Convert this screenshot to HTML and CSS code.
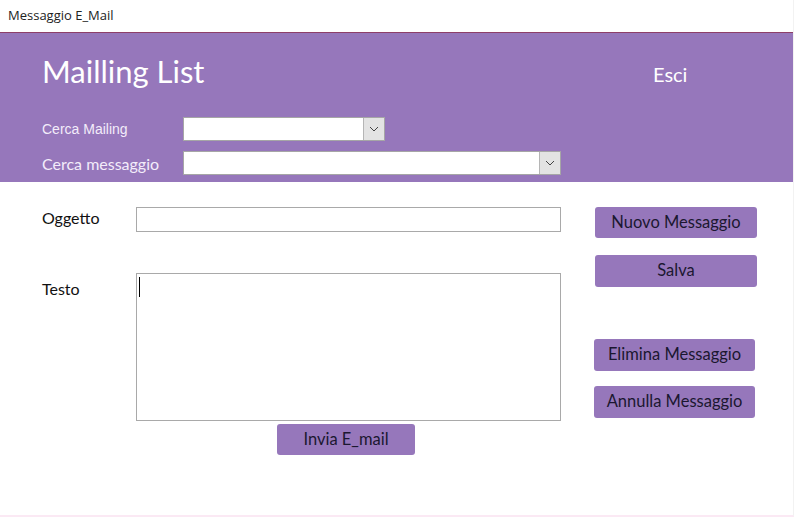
FILE: index.html
```html
<!DOCTYPE html>
<html lang="it">
<head>
<meta charset="utf-8">
<title>Messaggio E_Mail</title>
<link rel="stylesheet" href="styles.css">
</head>
<body>
<div class="window">
  <div class="titlebar">Messaggio E_Mail</div>
  <div class="header">
    <div class="header-top">
      <div class="app-title">Mailling List</div>
      <div class="esci">Esci</div>
    </div>
    <div class="search-row row-mailing">
      <div class="search-label arial">Cerca Mailing</div>
      <div class="combo combo-short">
        <div class="combo-field"></div>
        <div class="combo-btn"><svg width="10" height="6" viewBox="0 0 10 6"><path d="M1 1 L5 5 L9 1" fill="none" stroke="#444" stroke-width="1"/></svg></div>
      </div>
    </div>
    <div class="search-row row-msg">
      <div class="search-label calib">Cerca messaggio</div>
      <div class="combo combo-long">
        <div class="combo-field"></div>
        <div class="combo-btn"><svg width="10" height="6" viewBox="0 0 10 6"><path d="M1 1 L5 5 L9 1" fill="none" stroke="#444" stroke-width="1"/></svg></div>
      </div>
    </div>
  </div>
  <div class="main">
    <div class="form">
      <div class="form-row row-ogg">
        <div class="form-label">Oggetto</div>
        <div class="input"></div>
      </div>
      <div class="form-row row-testo">
        <div class="form-label testo-label">Testo</div>
        <div class="textarea"><span class="caret"></span></div>
      </div>
      <div class="send-row">
        <div class="btn btn-send">Invia E_mail</div>
      </div>
    </div>
    <div class="actions">
      <div class="btn btn-a">Nuovo Messaggio</div>
      <div class="btn btn-a btn-salva">Salva</div>
      <div class="btn btn-b btn-elimina">Elimina Messaggio</div>
      <div class="btn btn-b btn-annulla">Annulla Messaggio</div>
    </div>
  </div>
</div>
</body>
</html>
```

FILE: styles.css
```css
html, body {
  margin: 0;
  padding: 0;
  background: #ffffff;
}
body {
  width: 796px;
  height: 517px;
  overflow: hidden;
  font-family: "Lato", "Open Sans", sans-serif;
}
.window {
  width: 793px;
  height: 515px;
  border-right: 1px solid #f2f2f2;
  border-bottom: 2px solid #fbe9f4;
  background: #fff;
  display: flex;
  flex-direction: column;
}
.titlebar {
  height: 33px;
  box-sizing: border-box;
  padding: 6px 0 0 8px;
  font-family: "Open Sans", sans-serif;
  font-size: 13px;
  color: #222;
  border-bottom: 1px solid #8e3f68;
}
.header {
  background: #9677bb;
  height: 149px;
  box-sizing: border-box;
  padding-left: 42px;
  display: flex;
  flex-direction: column;
}
.header-top {
  display: flex;
  align-items: flex-start;
  height: 84px;
}
.app-title {
  margin-top: 18px;
  font-size: 31px;
  line-height: 40px;
  color: #ffffff;
  width: 611px;
}
.esci {
  margin-top: 29px;
  font-size: 20px;
  line-height: 24px;
  color: #ffffff;
}
.search-row {
  display: flex;
  align-items: center;
  height: 24px;
}
.row-msg {
  margin-top: 10px;
}
.search-label {
  width: 141px;
  color: #f3ecfa;
}
.arial {
  font-family: "Liberation Sans", Arial, sans-serif;
  font-size: 14px;
}
.calib {
  font-size: 16px;
}
.combo {
  display: flex;
  height: 24px;
  box-sizing: border-box;
  border: 1px solid #a6a6a6;
  background: #fff;
}
.combo-short { width: 202px; }
.combo-long { width: 378px; }
.combo-field { flex: 1; }
.combo-btn {
  width: 20px;
  background: #e3e3e3;
  border-left: 1px solid #b5b5b5;
  display: flex;
  align-items: center;
  justify-content: center;
}
.main {
  display: flex;
  padding-top: 25px;
}
.form {
  margin-left: 42px;
  width: 519px;
  display: flex;
  flex-direction: column;
}
.form-row {
  display: flex;
}
.form-label {
  width: 94px;
  font-size: 16px;
  color: #111;
  line-height: 22px;
}
.input {
  width: 425px;
  height: 25px;
  box-sizing: border-box;
  border: 1px solid #a9a9a9;
  background: #fff;
}
.row-testo {
  margin-top: 41px;
}
.testo-label {
  margin-top: 5px;
}
.textarea {
  width: 425px;
  height: 148px;
  box-sizing: border-box;
  border: 1px solid #a9a9a9;
  background: #fff;
  padding: 3px 0 0 2px;
}
.caret {
  display: block;
  width: 1px;
  height: 20px;
  background: #000;
}
.send-row {
  display: flex;
  padding-left: 235px;
  margin-top: 3px;
}
.btn {
  background: #9677bb;
  border-radius: 3px;
  color: #1b1730;
  font-size: 16.5px;
  display: flex;
  align-items: center;
  justify-content: center;
  box-sizing: border-box;
}
.btn-send {
  width: 138px;
  height: 31px;
  padding-bottom: 2px;
}
.actions {
  display: flex;
  flex-direction: column;
  margin-left: 34px;
}
.btn-a {
  width: 162px;
  height: 31px;
  padding-bottom: 2px;
}
.btn-salva {
  margin-top: 17px;
  height: 32px;
}
.btn-b {
  width: 161px;
  height: 32px;
  margin-left: -1px;
  padding-bottom: 2px;
}
.btn-elimina { margin-top: 52px; }
.btn-annulla { margin-top: 15px; }
```
